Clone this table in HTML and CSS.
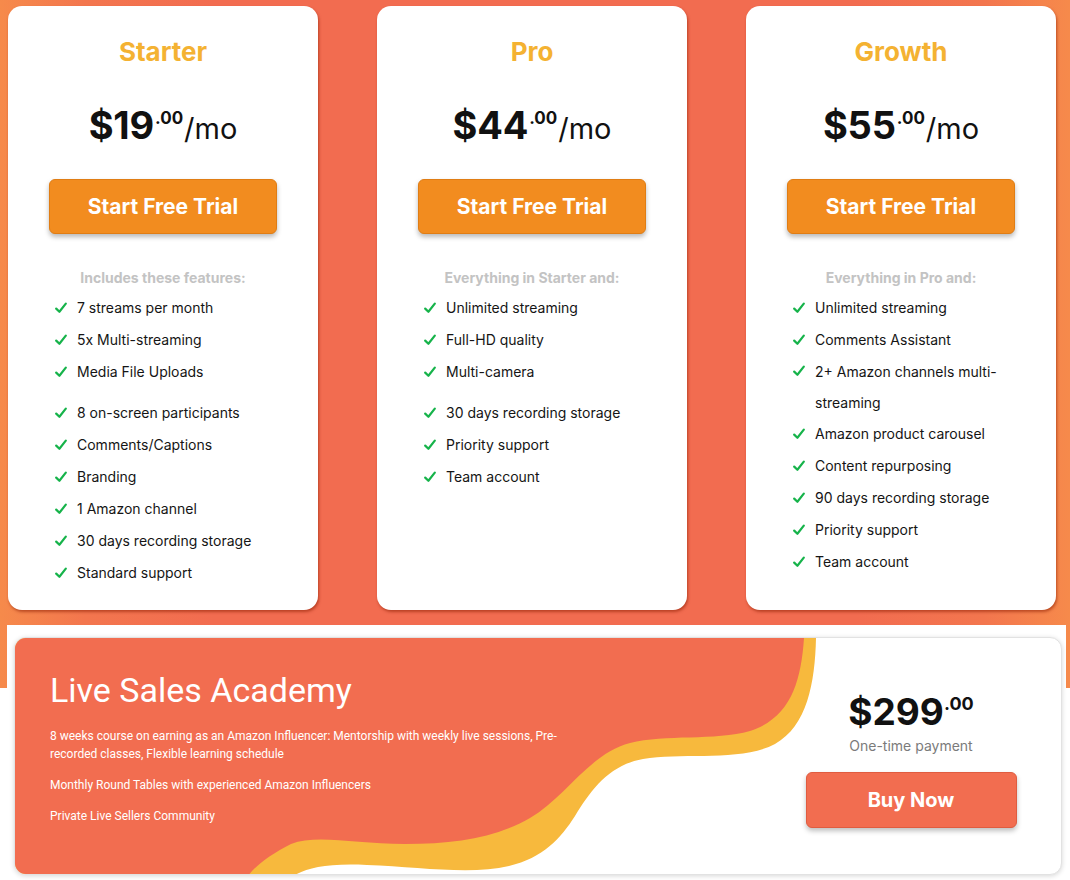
FILE: index.html
```html
<!DOCTYPE html>
<html lang="en">
<head>
<meta charset="utf-8">
<title>Pricing</title>
<link rel="stylesheet" href="styles.css">
</head>
<body>
<div class="hero">
  <div class="plans">
    <section class="plan">
      <h2 class="plan-name">Starter</h2>
      <div class="price"><span class="amount">$19</span><span class="cents">.00</span><span class="per">/mo</span></div>
      <button class="trial-btn">Start Free Trial</button>
      <p class="includes">Includes these features:</p>
      <ul class="features">
        <li><svg class="check" viewBox="0 0 12 12"><path d="M1.2 6.6 L4.4 9.8 L10.8 1.6"/></svg><span>7 streams per month</span></li>
        <li><svg class="check" viewBox="0 0 12 12"><path d="M1.2 6.6 L4.4 9.8 L10.8 1.6"/></svg><span>5x Multi-streaming</span></li>
        <li><svg class="check" viewBox="0 0 12 12"><path d="M1.2 6.6 L4.4 9.8 L10.8 1.6"/></svg><span>Media File Uploads</span></li>
        <li class="after-seam"><svg class="check" viewBox="0 0 12 12"><path d="M1.2 6.6 L4.4 9.8 L10.8 1.6"/></svg><span>8 on-screen participants</span></li>
        <li><svg class="check" viewBox="0 0 12 12"><path d="M1.2 6.6 L4.4 9.8 L10.8 1.6"/></svg><span>Comments/Captions</span></li>
        <li><svg class="check" viewBox="0 0 12 12"><path d="M1.2 6.6 L4.4 9.8 L10.8 1.6"/></svg><span>Branding</span></li>
        <li><svg class="check" viewBox="0 0 12 12"><path d="M1.2 6.6 L4.4 9.8 L10.8 1.6"/></svg><span>1 Amazon channel</span></li>
        <li><svg class="check" viewBox="0 0 12 12"><path d="M1.2 6.6 L4.4 9.8 L10.8 1.6"/></svg><span>30 days recording storage</span></li>
        <li><svg class="check" viewBox="0 0 12 12"><path d="M1.2 6.6 L4.4 9.8 L10.8 1.6"/></svg><span>Standard support</span></li>
      </ul>
    </section>
    <section class="plan">
      <h2 class="plan-name">Pro</h2>
      <div class="price"><span class="amount">$44</span><span class="cents">.00</span><span class="per">/mo</span></div>
      <button class="trial-btn">Start Free Trial</button>
      <p class="includes">Everything in Starter and:</p>
      <ul class="features">
        <li><svg class="check" viewBox="0 0 12 12"><path d="M1.2 6.6 L4.4 9.8 L10.8 1.6"/></svg><span>Unlimited streaming</span></li>
        <li><svg class="check" viewBox="0 0 12 12"><path d="M1.2 6.6 L4.4 9.8 L10.8 1.6"/></svg><span>Full-HD quality</span></li>
        <li><svg class="check" viewBox="0 0 12 12"><path d="M1.2 6.6 L4.4 9.8 L10.8 1.6"/></svg><span>Multi-camera</span></li>
        <li class="after-seam"><svg class="check" viewBox="0 0 12 12"><path d="M1.2 6.6 L4.4 9.8 L10.8 1.6"/></svg><span>30 days recording storage</span></li>
        <li><svg class="check" viewBox="0 0 12 12"><path d="M1.2 6.6 L4.4 9.8 L10.8 1.6"/></svg><span>Priority support</span></li>
        <li><svg class="check" viewBox="0 0 12 12"><path d="M1.2 6.6 L4.4 9.8 L10.8 1.6"/></svg><span>Team account</span></li>
      </ul>
    </section>
    <section class="plan">
      <h2 class="plan-name">Growth</h2>
      <div class="price"><span class="amount">$55</span><span class="cents">.00</span><span class="per">/mo</span></div>
      <button class="trial-btn">Start Free Trial</button>
      <p class="includes">Everything in Pro and:</p>
      <ul class="features">
        <li><svg class="check" viewBox="0 0 12 12"><path d="M1.2 6.6 L4.4 9.8 L10.8 1.6"/></svg><span>Unlimited streaming</span></li>
        <li><svg class="check" viewBox="0 0 12 12"><path d="M1.2 6.6 L4.4 9.8 L10.8 1.6"/></svg><span>Comments Assistant</span></li>
        <li class="wrapped"><svg class="check" viewBox="0 0 12 12"><path d="M1.2 6.6 L4.4 9.8 L10.8 1.6"/></svg><span>2+ Amazon channels multi-streaming</span></li>
        <li><svg class="check" viewBox="0 0 12 12"><path d="M1.2 6.6 L4.4 9.8 L10.8 1.6"/></svg><span>Amazon product carousel</span></li>
        <li><svg class="check" viewBox="0 0 12 12"><path d="M1.2 6.6 L4.4 9.8 L10.8 1.6"/></svg><span>Content repurposing</span></li>
        <li><svg class="check" viewBox="0 0 12 12"><path d="M1.2 6.6 L4.4 9.8 L10.8 1.6"/></svg><span>90 days recording storage</span></li>
        <li><svg class="check" viewBox="0 0 12 12"><path d="M1.2 6.6 L4.4 9.8 L10.8 1.6"/></svg><span>Priority support</span></li>
        <li><svg class="check" viewBox="0 0 12 12"><path d="M1.2 6.6 L4.4 9.8 L10.8 1.6"/></svg><span>Team account</span></li>
      </ul>
    </section>
  </div>
</div>

<div class="academy-panel">
  <div class="academy">
    <svg class="academy-wave" viewBox="0 0 1048 238" preserveAspectRatio="none" aria-hidden="true">
      <path class="wave-yellow" d="M0 0 H801 C800 45 792 88 760 106 C726 124 668 114 628 121 C594 127 576 152 560 178 C546 200 528 220 494 228 C456 237 404 229 352 227 C312 225 292 230 278 238 H0 Z"/>
      <path class="wave-coral" d="M0 0 H789 C786 45 775 80 735 93 C700 103 650 96 615 105 C575 115 550 160 515 180 C480 200 440 206 390 206 C340 206 302 196 276 206 C256 216 240 228 233 238 H0 Z"/>
    </svg>
    <div class="academy-info">
      <h2 class="academy-title">Live Sales Academy</h2>
      <p>8 weeks course on earning as an Amazon Influencer: Mentorship with weekly live sessions, Pre-recorded classes, Flexible learning schedule</p>
      <p>Monthly Round Tables with experienced Amazon Influencers</p>
      <p>Private Live Sellers Community</p>
    </div>
    <div class="academy-buy">
      <div class="academy-price"><span class="amount">$299</span><span class="cents">.00</span></div>
      <div class="academy-note">One-time payment</div>
      <button class="buy-btn">Buy Now</button>
    </div>
  </div>
</div>
</body>
</html>
```

FILE: styles.css
```css
* {
  box-sizing: border-box;
}

html, body {
  margin: 0;
  padding: 0;
  background: #ffffff;
}

body {
  font-family: Inter, "Noto Sans", "Liberation Sans", sans-serif;
  color: #111111;
  width: 1070px;
  height: 880px;
  overflow: hidden;
}

.hero {
  height: 688px;
  padding: 6px 14px 0 8px;
  background: linear-gradient(90deg, #f68a4b 0%, #f3764e 8%, #f26c50 20%, #f26c50 80%, #f3764e 92%, #f68a4b 100%);
}

.plans {
  display: grid;
  grid-template-columns: repeat(3, 310px);
  column-gap: 59px;
}

.plan {
  height: 604px;
  background: #ffffff;
  border-radius: 14px;
  box-shadow: 1px 2px 3px rgba(140, 30, 0, 0.55);
  padding-top: 30px;
  display: flex;
  flex-direction: column;
  align-items: center;
}

.plan-name {
  margin: 0;
  font-size: 26px;
  line-height: 32px;
  font-weight: 700;
  color: #f4b232;
}

.price {
  margin-top: 27px;
  height: 46px;
  line-height: 46px;
  white-space: nowrap;
}

.price .amount {
  font-size: 38px;
  font-weight: 700;
  letter-spacing: -0.2px;
}

.price .cents {
  font-size: 17px;
  font-weight: 700;
  vertical-align: 15px;
  margin-left: 1px;
}

.price .per {
  font-size: 29px;
  font-weight: 400;
  margin-left: 1px;
}

.trial-btn {
  margin-top: 38px;
  width: 228px;
  height: 55px;
  border: 1px solid #e07d14;
  border-radius: 6px;
  background: #f28c1f;
  color: #ffffff;
  font-family: inherit;
  font-size: 21px;
  font-weight: 700;
  box-shadow: 0 3px 5px rgba(0, 0, 0, 0.28);
}

.includes {
  margin: 34px 0 0;
  font-size: 14px;
  line-height: 20px;
  font-weight: 700;
  color: #c3c3c3;
}

.features {
  align-self: stretch;
  list-style: none;
  margin: 4px 0 0;
  padding: 0 20px 0 47px;
}

.features li {
  display: flex;
  align-items: flex-start;
  gap: 10px;
  font-size: 14px;
  line-height: 32px;
  color: #151515;
}

.features li.after-seam {
  margin-top: 9px;
}

.features li.wrapped {
  line-height: 31px;
}

.check {
  flex: none;
  width: 12px;
  height: 12px;
  margin-top: 10px;
  fill: none;
  stroke: #16b34a;
  stroke-width: 2.2;
  stroke-linecap: round;
  stroke-linejoin: round;
}

.features li.wrapped .check {
  margin-top: 9px;
}

.academy-panel {
  position: relative;
  margin: -63px 4px 0 7px;
  height: 255px;
  background: #ffffff;
  padding: 12px 4px 5px 7px;
}

.academy {
  position: relative;
  height: 238px;
  display: flex;
  border: 1px solid #e2e2e2;
  border-radius: 12px;
  overflow: hidden;
  background: #ffffff;
  box-shadow: 0 1px 5px rgba(0, 0, 0, 0.16);
}

.academy-wave {
  position: absolute;
  left: 0;
  top: 0;
  width: 1048px;
  height: 238px;
}

.wave-yellow {
  fill: #f7b93d;
}

.wave-coral {
  fill: #f26d50;
}

.academy-info {
  position: relative;
  flex: 1;
  padding: 32px 0 0 35px;
  color: #ffffff;
  font-family: Roboto, "Liberation Sans", sans-serif;
}

.academy-title {
  margin: 0 0 17px;
  font-size: 34px;
  line-height: 40px;
  font-weight: 400;
}

.academy-info p {
  margin: 0 0 13px;
  width: 522px;
  font-size: 12px;
  line-height: 18px;
}

.academy-buy {
  position: relative;
  width: 256px;
  margin-right: 22px;
  padding-top: 44px;
  display: flex;
  flex-direction: column;
  align-items: center;
}

.academy-price {
  height: 44px;
  line-height: 44px;
  white-space: nowrap;
}

.academy-price .amount {
  font-size: 37px;
  font-weight: 700;
}

.academy-price .cents {
  font-size: 18px;
  font-weight: 700;
  vertical-align: 15px;
}

.academy-note {
  margin-top: 10px;
  font-size: 14px;
  line-height: 20px;
  color: #7b7b7b;
}

.buy-btn {
  margin-top: 16px;
  width: 211px;
  height: 56px;
  border: 1px solid #e05c40;
  border-radius: 6px;
  background: #f26d50;
  color: #ffffff;
  font-family: inherit;
  font-size: 20px;
  font-weight: 700;
  box-shadow: 0 3px 5px rgba(0, 0, 0, 0.25);
}
```
